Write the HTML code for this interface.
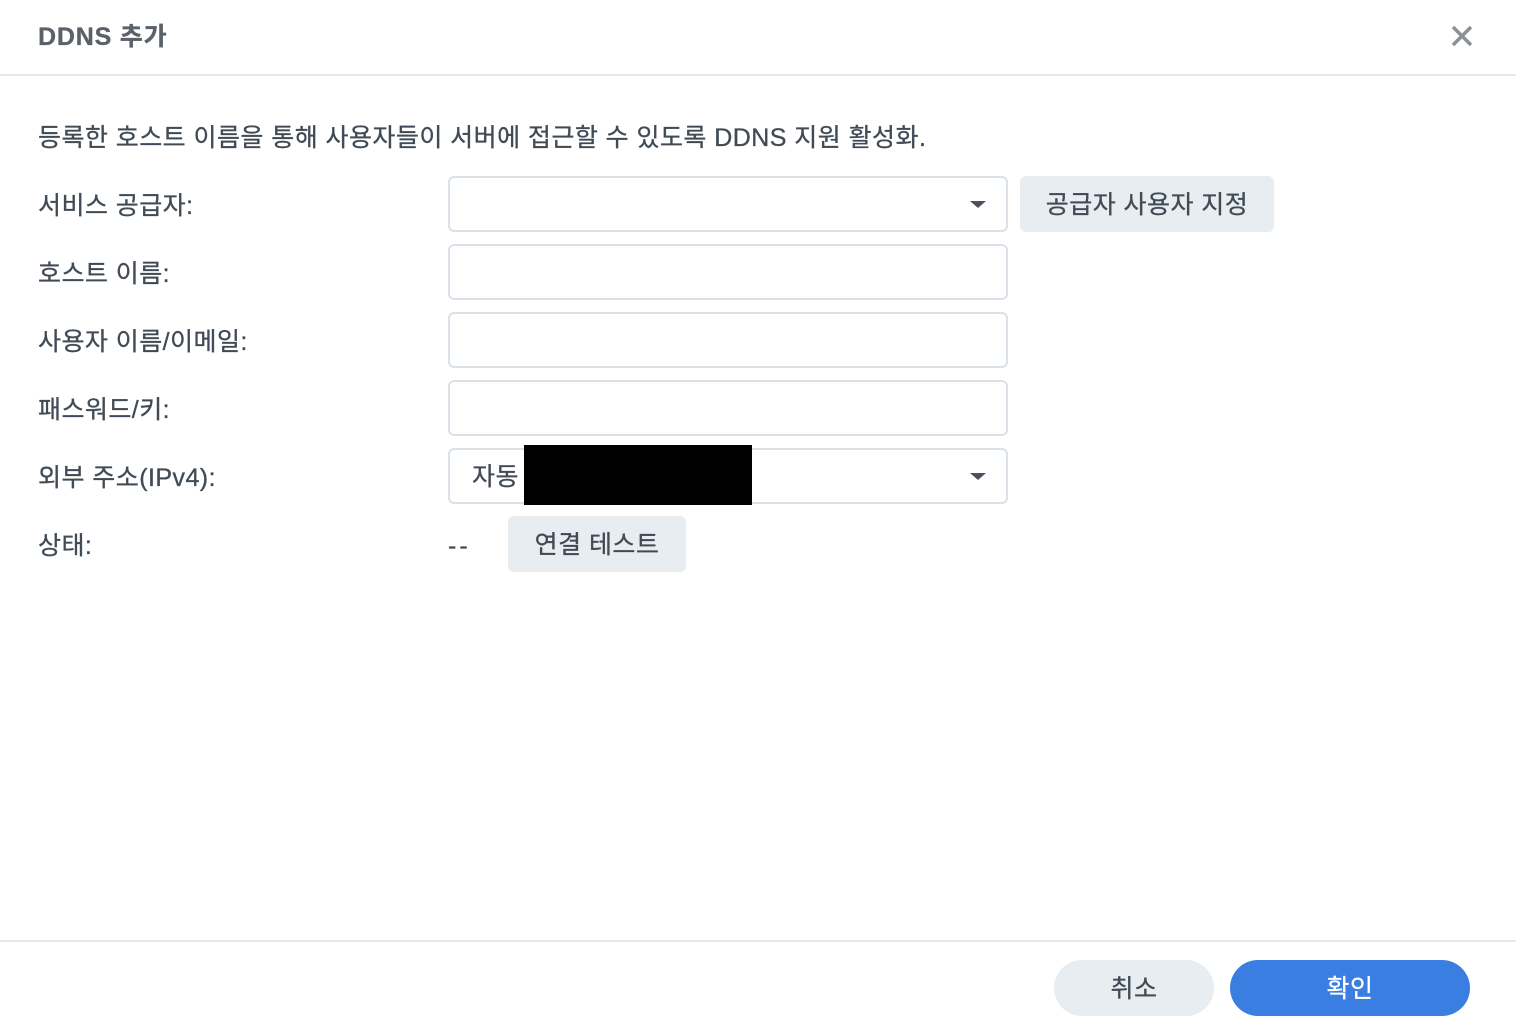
<!DOCTYPE html>
<html><head><meta charset="utf-8"><style>
*{box-sizing:border-box;margin:0;padding:0}
body{width:1516px;height:1034px;background:#fff;font-family:"Liberation Sans","Noto Sans CJK KR",sans-serif;color:#414b55;position:relative;overflow:hidden;font-size:25px;letter-spacing:0.45px;-webkit-text-stroke:0.3px #414b55}
.abs{position:absolute;white-space:nowrap}
.title{left:38px;top:20px;font-size:25px;font-weight:bold;color:#5a6169;line-height:34px;letter-spacing:0.8px;-webkit-text-stroke:0.3px #5a6169}
.hdr{left:0;top:74px;width:1516px;height:2px;background:#e3e8ee}
.ftr{left:0;top:940px;width:1516px;height:2px;background:#e3e8ee}
.lbl{left:38px;line-height:34px}
.inp{left:448px;width:560px;height:56px;border:2px solid #dbe1e8;border-radius:6px;background:#fff}
.arr{position:absolute;right:20px;top:23px;width:0;height:0;border-left:8px solid transparent;border-right:8px solid transparent;border-top:7px solid #4a535c}
.btn{background:#e8edf2;border-radius:6px;text-align:center;line-height:58px;height:56px}
</style></head><body>
<div class="abs title">DDNS 추가</div>
<svg class="abs" style="left:1451px;top:25px" width="22" height="22" viewBox="0 0 22 22"><path d="M2 2L20 20M20 2L2 20" stroke="#8c9197" stroke-width="3.5"/></svg>
<div class="abs hdr"></div>
<div class="abs lbl" style="top:121px">등록한 호스트 이름을 통해 사용자들이 서버에 접근할 수 있도록 DDNS 지원 활성화.</div>
<div class="abs lbl" style="top:189px">서비스 공급자:</div>
<div class="abs lbl" style="top:257px">호스트 이름:</div>
<div class="abs lbl" style="top:325px">사용자 이름/이메일:</div>
<div class="abs lbl" style="top:393px">패스워드/키:</div>
<div class="abs lbl" style="top:461px">외부 주소(IPv4):</div>
<div class="abs lbl" style="top:529px">상태:</div>
<div class="abs inp" style="top:176px"><div class="arr"></div></div>
<div class="abs btn" style="left:1020px;top:176px;width:254px">공급자 사용자 지정</div>
<div class="abs inp" style="top:244px"></div>
<div class="abs inp" style="top:312px"></div>
<div class="abs inp" style="top:380px"></div>
<div class="abs inp" style="top:448px"><div class="arr"></div><div style="position:absolute;left:22px;top:0;line-height:54px">자동</div></div>
<div class="abs" style="left:524px;top:445px;width:228px;height:60px;background:#000"></div>
<div class="abs" style="left:448px;top:529px;line-height:34px;letter-spacing:3px">--</div>
<div class="abs btn" style="left:508px;top:516px;width:178px">연결 테스트</div>
<div class="abs ftr"></div>
<div class="abs btn" style="left:1054px;top:960px;width:160px;border-radius:28px">취소</div>
<div class="abs btn" style="left:1230px;top:960px;width:240px;border-radius:28px;background:#3a7ee2;color:#fff;-webkit-text-stroke:0.3px #fff">확인</div>
</body></html>
